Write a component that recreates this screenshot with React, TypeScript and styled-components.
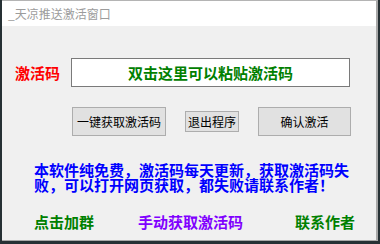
import React from "react";
import styled, { createGlobalStyle } from "styled-components";

const GlobalStyle = createGlobalStyle`
  html, body {
    margin: 0;
    padding: 0;
    background: #263034;
    font-family: "Noto Sans CJK SC", "Noto Sans", sans-serif;
  }
`;

const Desk = styled.div`
  width: 380px;
  height: 244px;
  padding-left: 2px;
  box-sizing: border-box;
  overflow: hidden;
`;

const Window = styled.div`
  width: 376px;
  height: 241px;
  box-sizing: border-box;
  border-top: 1px solid #b4b4b4;
  border-right: 2px solid #a8a8a8;
  border-bottom: 1px solid #a8a8a8;
  background: #f0f0f0;
  display: flex;
  flex-direction: column;
`;

const TitleBar = styled.div`
  height: 25px;
  background: #ffffff;
  display: flex;
  align-items: center;
  padding-left: 6px;
  font-size: 12px;
  color: #9c9c9c;
  flex-shrink: 0;
`;

const Body = styled.div`
  display: flex;
  flex-direction: column;
  padding-top: 32px;
`;

const CodeRow = styled.div`
  display: flex;
  align-items: center;
  padding-left: 13px;
  height: 29px;
`;

const Label = styled.div`
  width: 56px;
  font-size: 15px;
  font-weight: bold;
  color: #ff0000;
  line-height: 15px;
`;

const CodeBox = styled.div`
  width: 279px;
  height: 29px;
  box-sizing: border-box;
  border: 1px solid #7a7a7a;
  background: #ffffff;
  display: flex;
  align-items: center;
  justify-content: center;
  font-size: 15px;
  font-weight: bold;
  color: #008000;
`;

const ButtonRow = styled.div`
  display: flex;
  align-items: center;
  gap: 19px;
  margin-top: 20px;
  padding-left: 70px;
  height: 29px;
`;

const Button = styled.button<{ $w: number; $h: number }>`
  width: ${(p) => p.$w}px;
  height: ${(p) => p.$h}px;
  box-sizing: border-box;
  padding: 0;
  margin: 0;
  border: 1px solid #adadad;
  background: #e1e1e1;
  font-family: "Noto Sans CJK SC", "Noto Sans", sans-serif;
  font-size: 12px;
  color: #000000;
  display: flex;
  align-items: center;
  justify-content: center;
`;

const Notice = styled.div`
  width: 316px;
  margin-top: 26px;
  padding-left: 32px;
  font-size: 15px;
  font-weight: bold;
  line-height: 15px;
  color: #0000ff;
`;

const Links = styled.div`
  display: grid;
  grid-template-columns: 104px 157px auto;
  margin-top: 22px;
  padding-left: 32px;
`;

const LinkText = styled.div<{ $color: string }>`
  font-size: 15px;
  font-weight: bold;
  line-height: 15px;
  color: ${(p) => p.$color};
  white-space: nowrap;
`;

const App = () => {
  return (
    <Desk>
      <GlobalStyle />
      <Window>
        <TitleBar>_天凉推送激活窗口</TitleBar>
        <Body>
          <CodeRow>
            <Label>激活码</Label>
            <CodeBox>双击这里可以粘贴激活码</CodeBox>
          </CodeRow>
          <ButtonRow>
            <Button $w={94} $h={29}>一键获取激活码</Button>
            <Button $w={54} $h={21}>退出程序</Button>
            <Button $w={93} $h={29}>确认激活</Button>
          </ButtonRow>
          <Notice>
            本软件纯免费，激活码每天更新，获取激活码失败，可以打开网页获取，都失败请联系作者！
          </Notice>
          <Links>
            <LinkText $color="#008000">点击加群</LinkText>
            <LinkText $color="#8000ff">手动获取激活码</LinkText>
            <LinkText $color="#008000">联系作者</LinkText>
          </Links>
        </Body>
      </Window>
    </Desk>
  );
};

export default App;
